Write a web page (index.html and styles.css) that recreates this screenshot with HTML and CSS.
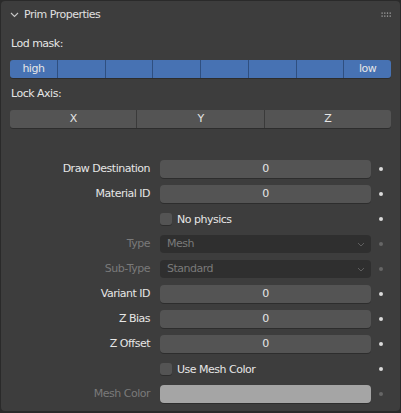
FILE: index.html
```html
<!DOCTYPE html>
<html>
<head>
<meta charset="utf-8">
<link rel="stylesheet" href="styles.css">
</head>
<body>
<div class="panel">
  <div class="header">
    <svg class="chev" width="9" height="6" viewBox="0 0 9 6"><path d="M1 1 L4.5 4.5 L8 1" fill="none" stroke="#c8c8c8" stroke-width="1.1"/></svg>
    <span class="title">Prim Properties</span>
    <svg class="grip" width="11" height="6" viewBox="0 0 11 6">
      <g fill="#b0b0b0">
        <rect x="0.5" y="0.5" width="1.2" height="1.2"/><rect x="3.2" y="0.5" width="1.2" height="1.2"/><rect x="5.9" y="0.5" width="1.2" height="1.2"/><rect x="8.6" y="0.5" width="1.2" height="1.2"/>
        <rect x="0.5" y="3.5" width="1.2" height="1.2"/><rect x="3.2" y="3.5" width="1.2" height="1.2"/><rect x="5.9" y="3.5" width="1.2" height="1.2"/><rect x="8.6" y="3.5" width="1.2" height="1.2"/>
      </g>
    </svg>
  </div>
  <div class="content">
    <div class="label-row">Lod mask:</div>
    <div class="seg blue">
      <div class="cell">high</div><div class="cell"></div><div class="cell"></div><div class="cell"></div><div class="cell"></div><div class="cell"></div><div class="cell"></div><div class="cell">low</div>
    </div>
    <div class="label-row">Lock Axis:</div>
    <div class="seg gray">
      <div class="cell">X</div><div class="cell">Y</div><div class="cell">Z</div>
    </div>

    <div class="props">
      <div class="prop"><div class="lbl">Draw Destination</div><div class="field num">0</div><div class="dot"></div></div>
      <div class="prop"><div class="lbl">Material ID</div><div class="field num">0</div><div class="dot"></div></div>
      <div class="prop"><div class="lbl"></div><div class="check"><span class="box"></span><span>No physics</span></div><div class="dot"></div></div>
      <div class="prop dis"><div class="lbl">Type</div><div class="field menu"><span>Mesh</span><svg width="8" height="5" viewBox="0 0 8 5"><path d="M1 1 L4 4 L7 1" fill="none" stroke="#5e5e5e" stroke-width="1"/></svg></div><div class="dot"></div></div>
      <div class="prop dis"><div class="lbl">Sub-Type</div><div class="field menu"><span>Standard</span><svg width="8" height="5" viewBox="0 0 8 5"><path d="M1 1 L4 4 L7 1" fill="none" stroke="#5e5e5e" stroke-width="1"/></svg></div><div class="dot"></div></div>
      <div class="prop"><div class="lbl">Variant ID</div><div class="field num">0</div><div class="dot"></div></div>
      <div class="prop"><div class="lbl">Z Bias</div><div class="field num">0</div><div class="dot"></div></div>
      <div class="prop"><div class="lbl">Z Offset</div><div class="field num">0</div><div class="dot"></div></div>
      <div class="prop"><div class="lbl"></div><div class="check"><span class="box"></span><span>Use Mesh Color</span></div><div class="dot"></div></div>
      <div class="prop dis"><div class="lbl">Mesh Color</div><div class="field color"></div><div class="dot"></div></div>
    </div>
  </div>
</div>
</body>
</html>
```
FILE: styles.css
```css
html, body {
  margin: 0;
  padding: 0;
  background: #2a2a2a;
  height: 100%;
}
body {
  font-family: "DejaVu Sans", sans-serif;
  font-size: 11px;
  letter-spacing: -0.5px;
  color: #e6e6e6;
}
.panel {
  margin: 1px 1px 0 1px;
  height: 410px;
  background: #3d3d3d;
  border-radius: 4px;
  box-sizing: border-box;
}
.header {
  height: 27px;
  display: flex;
  align-items: center;
  padding-left: 9px;
  padding-right: 8px;
  box-sizing: border-box;
}
.chev { margin-right: 5px; margin-top: 1px; }
.title { color: #e0e0e0; flex: 1; }
.grip { margin-top: 0px; }
.content {
  padding: 7px 9px 0 9px;
  display: flex;
  flex-direction: column;
  gap: 7px;
}
.label-row {
  height: 18px;
  line-height: 18px;
  padding-left: 1px;
}
.seg {
  height: 18px;
  display: flex;
  border-radius: 3px;
  overflow: hidden;
  box-shadow: 0 1px 0 rgba(0,0,0,0.25);
}
.seg .cell {
  flex: 1;
  line-height: 18px;
  text-align: center;
}
.seg.blue { background: #4772b3; }
.seg.blue .cell + .cell { border-left: 1px solid #2f4f80; }
.seg.gray { background: #545454; }
.seg.gray .cell + .cell { border-left: 1px solid #3a3a3a; }
.props {
  margin-top: 25px;
  display: flex;
  flex-direction: column;
  gap: 7px;
}
.prop {
  display: grid;
  grid-template-columns: 150px 211px 20px;
  height: 18px;
  align-items: center;
}
.lbl {
  text-align: right;
  padding-right: 10px;
  line-height: 18px;
}
.field {
  height: 18px;
  border-radius: 4px;
  background: #545454;
  box-shadow: 0 1px 0 rgba(0,0,0,0.25);
  line-height: 18px;
}
.field.num { text-align: center; }
.field.menu {
  background: #2f2f2f;
  display: flex;
  align-items: center;
  justify-content: space-between;
  padding: 0 6px 0 7px;
  box-shadow: none;
}
.field.color { background: #a5a5a5; }
.check {
  display: flex;
  align-items: center;
  gap: 5px;
}
.box {
  width: 12px;
  height: 12px;
  border-radius: 3px;
  background: #545454;
  box-shadow: 0 1px 0 rgba(0,0,0,0.25);
}
.dot {
  width: 4px;
  height: 4px;
  border-radius: 50%;
  background: #dadada;
  justify-self: center;
}
.dis .lbl, .dis .field.menu { color: #7a7a7a; }
.dis .dot { background: #666; }
```
